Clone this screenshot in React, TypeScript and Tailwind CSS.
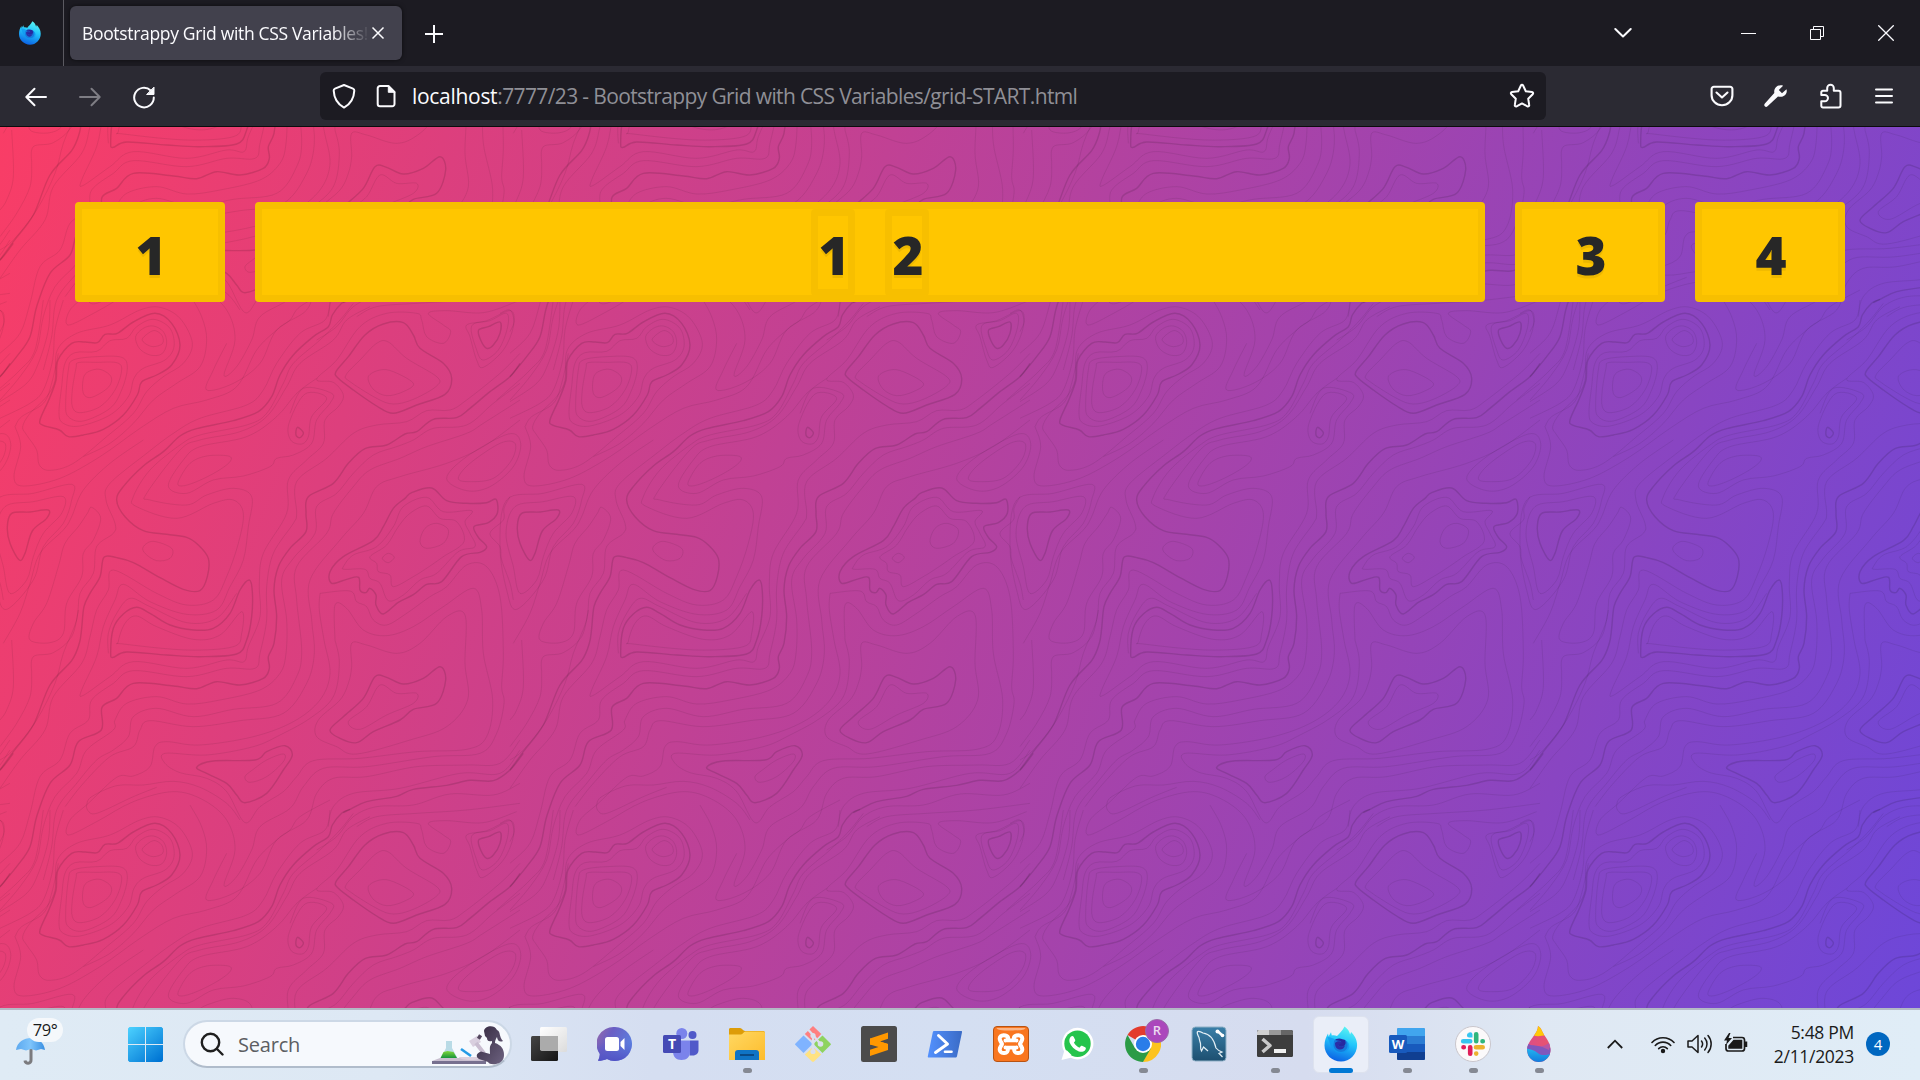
import React from 'react';

/* ---------- topographic background ---------- */

const TILE = 1530;

const boldRings = [
  '120,360 148,296 168,240 174,180 215,130 255,126 292,128 315,103 352,100 400,66 465,40 515,70 540,135 515,195 470,225 425,246 412,285 370,345 310,388 250,405 205,410 178,390 130,376',
  '1008,215 1045,170 1095,105 1150,72 1210,68 1240,105 1260,145 1330,190 1355,235 1335,283 1250,315 1180,340 1130,318 1060,270 1015,235',
  '1436,90 1465,80 1500,66 1500,100 1480,135 1460,145 1442,120',
  '892,382 910,398 900,413 888,405',
  '1235,578 1295,564 1340,602 1400,610 1460,608 1488,598 1492,640 1465,668 1422,680 1435,712 1460,740 1440,757 1385,770 1325,845 1280,853 1240,884 1195,907 1150,942 1128,915 1128,885 1110,865 1098,878 1080,870 1076,832 1040,838 995,850 990,815 1030,770 1120,722 1150,680 1180,625 1215,595',
  '35,640 90,636 145,630 140,655 97,693 75,760 58,780 30,730 22,680',
  '340,985 370,942 410,922 450,940 510,975 580,990 640,985 690,940 720,870 748,840 757,875 755,950 740,1020 710,1062 600,1070 500,1065 380,1056 340,1072 332,1060',
  '590,1402 640,1383 765,1380 800,1355 855,1337 877,1365 850,1410 800,1480 735,1508 710,1485 680,1450 620,1420',
  '990,1290 1030,1250 1090,1195 1125,1130 1160,1132 1210,1152 1270,1135 1320,1100 1337,1140 1310,1210 1240,1228 1200,1260 1120,1295 1070,1328 1020,1315',
];

const boldLines = [
  '1570,1360 1530,1410 1480,1442 1410,1441 1340,1456 1240,1468 1190,1489 1100,1505 1050,1528 1030,1538',
  '1050,-2 1025,10 997,45 985,80 940,110 880,165 840,225 815,290 775,335 700,362 590,386 540,408 490,455 430,498 370,560 350,600 375,650 430,692 500,703 560,712 595,735 625,775 622,830 600,872 550,868 480,833 400,788 350,773 312,772 300,830 270,880 252,920 245,985 238,1030 215,1082 150,1155 100,1275 40,1355 0,1410',
  '1560,190 1530,230 1470,275 1410,325 1370,353 1300,358 1250,395 1215,402 1160,435 1095,446 1045,490 1000,550 925,590 918,640 918,695 870,745 835,800 822,870 830,950 822,1030 805,1070 808,1105 790,1135 720,1155 650,1145 590,1166 520,1158 400,1150 350,1195 306,1222 304,1290 235,1325 210,1395 150,1450 110,1550 90,1640 50,1700 0,1760',
];

const thinRings = [
  '407,110 430,85 460,78 490,95 500,130 485,162 450,165 418,145',
  '428,115 460,92 485,105 488,130 460,140 435,130',
  '250,235 265,215 300,208 333,230 325,262 275,292 250,280',
  '235,188 290,187 350,188 365,210 345,270 300,320 240,338 217,320 217,270 228,205',
  '220,180 290,170 365,172 382,205 365,270 330,325 250,363 205,350 197,310 205,210',
  '177,340 185,260 195,190 225,158 290,154 330,122 380,115 410,80 460,58 510,85 522,140 495,180 430,205 402,235 385,290 330,345 240,378 190,370',
  '68,380 90,340 140,290 165,240 172,150 230,100 330,75 420,30 480,22 540,55 577,130 550,190 490,230 440,275 400,340 320,410 220,490 150,511 118,495 110,450 80,405',
  '535,545 570,490 620,468 685,468 690,485 650,515 590,545 545,558',
  '867,370 915,282 980,294 935,350 925,410 905,432 872,420',
  '1038,225 1080,180 1130,130 1165,126 1220,175 1310,230 1310,258 1240,298 1180,312 1130,295 1050,245',
  '1105,230 1140,210 1180,215 1240,250 1210,275 1160,287 1120,268',
  '1400,75 1460,62 1532,32 1540,80 1510,150 1450,202 1430,180 1410,110',
  '1415,78 1470,62 1520,40 1522,85 1495,150 1450,180 1430,150',
  '1340,535 1400,470 1525,402 1562,430 1540,500 1470,560 1400,572',
  '1375,535 1410,490 1500,430 1545,430 1535,480 1480,535 1410,545',
  '1030,800 1060,765 1130,740 1180,680 1210,620 1280,592 1330,635 1415,632 1395,665 1410,700 1425,740 1375,755 1310,820 1260,840 1210,885 1165,902 1140,850 1110,835 1095,808 1035,808',
  '1110,770 1160,735 1195,680 1230,640 1280,618 1320,655 1370,665 1392,725 1330,770 1290,798 1240,830 1180,860 1170,825 1135,815 1130,790',
  '1260,725 1275,685 1310,670 1345,690 1330,730 1280,745',
  '1147,775 1165,760 1183,772 1165,788',
  '15,620 100,605 190,590 185,640 130,700 100,770 80,840 30,880 10,800 -12,700',
  '-10,600 100,580 215,553 215,600 190,670 130,740 100,840 20,928 -10,870 -30,740',
  '262,640 275,622 302,655 280,720 250,760 245,830 200,910 190,1000 150,1028 90,1020 100,970 140,910 175,800 195,730 235,680',
  '430,740 460,724 515,745 510,775 470,782 435,760',
  '355,1025 375,970 410,948 470,980 580,1018 660,1005 725,935 725,1000 700,1040 560,1050 370,1032',
  '735,1430 760,1408 800,1380 850,1362 850,1385 800,1430 750,1447',
  '1045,1265 1100,1220 1140,1155 1190,1180 1250,1180 1240,1210 1160,1245 1080,1288',
  '1055,1100 1055,1030 1100,1035 1190,1060 1260,1030 1340,950 1395,945 1395,1090 1403,1200 1340,1280 1230,1320 1070,1362 1010,1340 950,1310 955,1260 1020,1200 1045,1150',
];

const thinLines = [
  '130,0 105,150 60,210 0,265 -40,300',
  '150,0 145,90 115,190 80,250 0,305',
  '190,0 165,90 158,180 130,270 90,310 0,355',
  '-30,40 0,30 12,65 0,95',
  '45,380 62,440 42,530 70,558 180,535 300,470 420,385 520,325 620,300 710,260 770,150 830,90 870,60 900,20 990,-30',
  '45,380 65,350 130,310 155,250 175,160',
  '570,-15 605,50 620,120 600,200 530,250 460,300 400,370 330,430 250,470',
  '990,0 975,60 900,100 830,190 790,270 740,315 600,355 520,400 440,460 330,550 318,600 345,670 340,700 290,740 280,820 240,880 230,960 190,1060 165,1150 110,1260 40,1350 0,1380',
  '1060,10 1020,60 960,120 880,190 850,250 800,340 740,375 600,405 540,435 450,510 400,590 410,620 530,655 640,610 700,600 730,640 715,730 680,830 640,900 560,915 470,880 340,810 325,870 290,930 270,1010 245,1090 160,1190 135,1290 60,1380 0,1465',
  '1110,20 1040,60 1000,120 900,190 860,260 800,350 720,395 600,420 540,450 440,580 450,600 560,615 620,585 700,565 755,590 745,680 730,780 690,860 650,930 560,943 450,905 370,853 345,900 310,980 290,1070 245,1170 250,1186 330,1130 400,1085 560,1105 680,1080 732,1085 745,1040 780,950 778,850 790,760 860,640 865,540 920,480 970,430 975,360 1015,320 1030,285 1000,247 950,238 1010,180 1080,80 1160,40 1250,40 1265,60 1280,110 1330,130 1352,95 1330,75 1285,40 1340,32 1450,38 1550,5',
  '870,340 910,265 995,280 990,310 950,360 935,430 880,465 830,475 810,500 730,528 640,540 560,580 505,558 550,480 600,440 740,410 830,350 890,280 950,235',
  '325,1060 325,1000 350,940 390,895 450,920 560,968 650,955 710,880',
  '1560,160 1500,220 1400,300 1350,330 1280,332 1220,365 1130,375 1060,400 980,475 890,545 890,640 880,670 820,760 800,860 800,960 780,1060 765,1105 680,1105 560,1130 400,1112 340,1150 275,1200 265,1260 210,1300 180,1380 120,1430 90,1540 60,1630 0,1690',
  '1560,250 1480,310 1400,375 1300,385 1240,420 1190,440 1120,465 1060,520 1010,580 950,620 945,700 880,775 845,840 860,960 858,1060 840,1120 780,1170 660,1200 560,1212 470,1190 380,1210 345,1260 340,1290 260,1350 230,1420 165,1490 130,1580 110,1680 60,1760 0,1830',
  '1560,300 1450,370 1400,400 1280,440 1200,475 1110,510 1060,560 1000,640 980,700 890,800 890,900 905,1050 890,1130 830,1210 700,1228 580,1250 470,1225 400,1250 385,1310 340,1350 290,1380 230,1450 170,1530 155,1640 130,1740',
  '1560,360 1450,440 1340,490 1200,530 1130,560 1090,640 1020,720 930,840 935,960 943,1060 920,1150 850,1240 720,1262 580,1280 450,1262 420,1290 400,1340 330,1370 250,1450 195,1520',
  '960,880 1050,873 1070,905 1100,920 1120,960 1160,975 1220,940 1290,890 1340,860 1400,795 1460,800 1500,890 1510,1060 1505,1160 1512,1210 1490,1300 1440,1360 1300,1370 1100,1400 970,1405 910,1460 870,1525 780,1580 755,1650 710,1730 672,1755 705,1650 680,1560 610,1500 520,1475 400,1505 290,1565 205,1605 210,1560 265,1510 350,1432 400,1428 450,1400 465,1340 500,1325 600,1335 760,1310 880,1265 960,1200 990,1120 972,1020 958,930 960,880',
  '1005,1020 1005,915 1040,925 1090,990 1160,1007 1240,980 1330,920 1420,865 1445,930 1450,1060 1478,1200 1460,1310 1400,1348 1250,1355 1080,1375 940,1382 890,1430 850,1475 780,1520 735,1568 680,1475 620,1435 540,1418 495,1390 495,1360 620,1365 760,1340 840,1305 930,1255 1000,1190 1018,1090 1005,1020',
  '262,1530 260,1515 275,1490 350,1457 430,1455 520,1444 600,1462 680,1510 720,1560',
  '262,1530 290,1540 400,1490 470,1462',
  '1560,1320 1500,1390 1400,1395 1250,1400 1100,1430 1000,1435 950,1480 920,1560 830,1620 780,1720 700,1780 620,1800 640,1740 680,1660',
  '1560,1350 1500,1420 1380,1420 1200,1465 1060,1480 1000,1520 985,1580',
  '1560,1450 1480,1485 1350,1482 1240,1515 1130,1520 1060,1550 1010,1610 950,1650',
  '1560,1510 1400,1530 1250,1540 1130,1550 1070,1580',
  '1530,590 1512,625 1510,660 1470,700 1500,740 1505,780 1530,850 1540,900',
  '35,1020 40,1160 20,1230 0,1260',
  '95,1120 100,1070 160,1058 215,1010 235,930',
  '95,1120 90,1190 50,1270 0,1340',
  '10,1030 60,940 90,850 120,760 190,690 215,650 250,570 330,490 430,420',
];

type Pt = [number, number];

function smooth(source: string, closed: boolean): string {
  const p: Pt[] = source.split(' ').map((s) => s.split(',').map(Number) as Pt);
  const n = p.length;
  const at = (i: number): Pt => (closed ? p[(i + n) % n] : p[Math.max(0, Math.min(n - 1, i))]);
  let d = `M${p[0][0]} ${p[0][1]}`;
  for (let i = 0; i < (closed ? n : n - 1); i++) {
    const [a, b, c, e] = [at(i - 1), at(i), at(i + 1), at(i + 2)];
    d += `C${(b[0] + (c[0] - a[0]) / 6).toFixed(1)} ${(b[1] + (c[1] - a[1]) / 6).toFixed(1)} ${(c[0] - (e[0] - b[0]) / 6).toFixed(1)} ${(c[1] - (e[1] - b[1]) / 6).toFixed(1)} ${c[0]} ${c[1]}`;
  }
  return closed ? d + 'Z' : d;
}

const boldPath = boldRings.map((s) => smooth(s, true)).join('') + boldLines.map((s) => smooth(s, false)).join('');
const thinPath = thinRings.map((s) => smooth(s, true)).join('') + thinLines.map((s) => smooth(s, false)).join('');
const shifts = [-TILE, 0, TILE];

function Topography() {
  return (
    <svg className="absolute inset-0 h-full w-full" aria-hidden="true">
      <defs>
        <g id="contours" fill="none" stroke="#000">
          <path d={thinPath} strokeWidth="2.5" strokeOpacity="0.095" />
          <path d={boldPath} strokeWidth="4.3" strokeOpacity="0.12" />
        </g>
        <pattern id="topo" width={TILE} height={TILE} patternUnits="userSpaceOnUse" patternTransform="translate(0 173) scale(0.33333)">
          {shifts.map((x) => shifts.map((y) => <use key={`${x},${y}`} href="#contours" x={x} y={y} />))}
        </pattern>
      </defs>
      <rect width="100%" height="100%" fill="url(#topo)" />
    </svg>
  );
}

/* ---------- icons ---------- */

function FirefoxDev({ size, id }: { size: number; id: string }) {
  return (
    <svg width={size} height={size} viewBox="0 0 36 36">
      <defs>
        <linearGradient id={id} x1="0.7" y1="0" x2="0.4" y2="1">
          <stop offset="0" stopColor="#5cf6f2" />
          <stop offset="0.45" stopColor="#22c4fb" />
          <stop offset="1" stopColor="#0b62e4" />
        </linearGradient>
      </defs>
      <path d="M21.500.5c3 2 5 4.800 5.600 8l1-2.500c3 3 6 7.500 6 13C34.100 28 27 35.500 18 35.500S1.500 28.500 1.500 19.500c0-5 1.500-8.500 3.500-12l.6 3L8 6.300l.8 3.200c1.800-.4 3.700-.1 5.200.6C16 7.500 19.500 5 21.500.5Z" fill={`url(#${id})`} />
      <path d="M11 15c2-2.500 5.500-3 8.500-1.700 3 .2 5.500 3 5 7-.5 4-3.500 5.700-6.500 5.700-4 0-7.500-3-7.500-7Z" fill="#26289f" />
      <path d="M4.500 11c3 .5 6 .8 8.500 3.200 2 .4 4 .3 5.200 1.100-.2 1.400-2.200 2-3.700 2.300 0 2.600 2.500 3.800 5 2.900 3-1 3.800-3.500 2.500-6 4 1 5.500 5.500 3.300 9-3 4.500-10.300 5-14.300 1-3-3-4.500-8-6.500-13.500Z" fill="#1098f2" opacity=".75" />
      <path d="M12 17c2-2.500 6-2 7.500-.5-1.200 1.300-3.500 1.600-4.500 2.500 1.500 2.500 5 2 7 .3-.5 3-3 4.500-5.500 4.200-3-.4-4.500-3-4.500-6.500Z" fill="#2b2da6" />
    </svg>
  );
}

const line = { fill: 'none', stroke: '#fbfbfe', strokeWidth: 2, strokeLinecap: 'round' as const, strokeLinejoin: 'round' as const };

const BackIcon = () => (
  <svg width="24" height="24" viewBox="0 0 24 24" {...line}><path d="M22 12H2.500M10.500 3.800 2.300 12l8.200 8.200" /></svg>
);
const ForwardIcon = () => (
  <svg width="24" height="24" viewBox="0 0 24 24" {...line} stroke="#7e7d84"><path d="M2 12h19.500M13.500 3.800l8.200 8.200-8.200 8.200" /></svg>
);
const ReloadIcon = () => (
  <svg width="24" height="24" viewBox="0 0 24 24" {...line}>
    <path d="M21.800 12.500A9.800 9.800 0 1 1 18.700 5.400" />
    <path d="M22 2.500v7h-7Z" fill="#fbfbfe" strokeWidth="1" />
  </svg>
);
const ShieldIcon = () => (
  <svg width="24" height="26" viewBox="0 0 24 26" {...line}>
    <path d="M12 2 21 5.600c1 .4 1.400 1 1.300 2C22 15 18.500 21 12 24.600 5.500 21 2 15 1.700 7.600c-.1-1 .3-1.600 1.300-2Z" />
  </svg>
);
const PageIcon = () => (
  <svg width="20" height="24" viewBox="0 0 20 24" {...line}>
    <path d="M4 2h8.500L18.500 8v12a2.300 2.300 0 0 1-2.300 2.300H4A2.300 2.300 0 0 1 1.700 20V4.300A2.300 2.300 0 0 1 4 2Z" />
    <path d="M12.300 2v6.300h6.200Z" fill="#fbfbfe" strokeWidth="1" />
  </svg>
);
const StarIcon = () => (
  <svg width="26" height="26" viewBox="0 0 26 26" {...line}>
    <path d="M11.900 2.500c.5-1 1.700-1 2.200 0l2.700 5.700 6.200.9c1.100.2 1.500 1.300.7 2.100l-4.500 4.500 1 6.300c.2 1-.9 1.800-1.800 1.300L13 20.400l-5.400 2.900c-1 .5-2-.3-1.800-1.300l1-6.300-4.500-4.500c-.8-.8-.4-1.900.7-2.100l6.200-.9Z" />
  </svg>
);
const PocketIcon = () => (
  <svg width="24" height="22" viewBox="0 0 24 22" {...line} strokeWidth={2.1}>
    <path d="M3.800 1.800h16.400a2.200 2.200 0 0 1 2.200 2.200v6.200a10.400 10 0 0 1-20.800 0V4a2.200 2.200 0 0 1 2.200-2.200Z" />
    <path d="m6.500 7.500 5.500 5 5.500-5" />
  </svg>
);
const WrenchIcon = () => (
  <svg width="24" height="24" viewBox="0 0 24 24">
    <path d="M22.500 5.200 18 9.300l-3.200-3.200 4.300-4.400C14.500.1 9.500 3.300 10.300 9L.9 19.600c-.9 1-.8 1.900-.1 2.700.8.800 1.800.8 2.700 0L14 12.600c5.800 1.400 9.900-2.800 8.500-7.400Z" fill="#fbfbfe" />
  </svg>
);
const PuzzleIcon = () => (
  <svg width="22" height="26" viewBox="0 0 22 26" {...line}>
    <path d="M3 7.700h4.200V5a3.300 3.300 0 0 1 6.600 0v2.700h4.700a2 2 0 0 1 2 2v12.800a2 2 0 0 1-2 2H3a1.700 1.700 0 0 1-1.700-1.700v-4.500h3.500a3.200 3.200 0 0 0 0-6.400H1.300V9.400A1.700 1.700 0 0 1 3 7.700Z" />
  </svg>
);
const MenuIcon = () => (
  <svg width="18" height="16" viewBox="0 0 18 16" {...line}><path d="M1 1.500h16M1 8h16M1 14.500h16" /></svg>
);

const Sz = ({ children, w = 36, h = 36 }: { children: React.ReactNode; w?: number; h?: number }) => (
  <svg width={w} height={h} viewBox={`0 0 ${w} ${h}`}>{children}</svg>
);

const TaskView = () => (
  <Sz>
    <defs>
      <linearGradient id="tvd" x1="0" y1="0" x2="1" y2="1"><stop stopColor="#454545" /><stop offset="1" stopColor="#151515" /></linearGradient>
      <linearGradient id="tvl" x1="0" y1="0" x2="1" y2="1"><stop stopColor="#fff" /><stop offset="1" stopColor="#dcdcdc" /></linearGradient>
    </defs>
    <rect x="9" y="1" width="27" height="25" rx="1.500" fill="url(#tvl)" />
    <rect x="0" y="10" width="27" height="25" rx="1.500" fill="url(#tvd)" />
    <path d="M9 10h18v15H10.500L9 24Z" fill="#ababab" />
  </Sz>
);
const Chat = () => (
  <Sz>
    <defs><linearGradient id="cht" x1="0" y1="0" x2="1" y2="0.500"><stop stopColor="#9a6aa8" /><stop offset="0.400" stopColor="#6a5fc4" /><stop offset="1" stopColor="#5b7fe0" /></linearGradient>
      <linearGradient id="chs" x1="0" y1="0" x2="0" y2="1"><stop offset="0.450" stopColor="#5558c8" stopOpacity="0" /><stop offset="1" stopColor="#5152c4" /></linearGradient></defs>
    <path d="M18 1a17 17 0 1 1-8 32c-2.500 1.200-5.500 1.700-9 1.800 1-1.800 1.600-4 1.800-6.800A17 17 0 0 1 18 1Z" fill="url(#cht)" />
    <path d="M18 1a17 17 0 1 1-8 32c-2.500 1.200-5.500 1.700-9 1.800 1-1.800 1.600-4 1.800-6.800A17 17 0 0 1 18 1Z" fill="url(#chs)" />
    <rect x="8" y="11" width="14" height="14" rx="2.500" fill="#fff" />
    <path d="m23.500 16 4-4v12l-4-4Z" fill="#fff" />
  </Sz>
);
const Teams = () => (
  <Sz>
    <circle cx="29.500" cy="9" r="4" fill="#5059c9" />
    <path d="M27 14.500h8.500V24c0 3-2 5.500-6 5.500h-3Z" fill="#5059c9" />
    <circle cx="18.800" cy="7.500" r="5.500" fill="#7b83eb" />
    <path d="M10 14.500h17v11c0 5-3 8.500-8.500 8.500S10 31 10 25Z" fill="#7b83eb" />
    <rect x="0" y="9" width="18" height="18" rx="1.500" fill="#454ab5" />
    <text x="9" y="23" fontSize="14" fontWeight="700" textAnchor="middle" fill="#fff">T</text>
  </Sz>
);
const Folder = () => (
  <Sz>
    <defs><linearGradient id="fol" x1="0" y1="0" x2="1" y2="1"><stop stopColor="#ffd862" /><stop offset="1" stopColor="#fdbc2c" /></linearGradient></defs>
    <path d="M0 3.500C0 2.500.700 2 1.500 2H11c2 0 3 3 5 3h18c1 0 2 .6 2 1.500V15H0Z" fill="#dd9c08" />
    <path d="M0 8.500h12c2 0 2.500-3 4.500-3H34.500c.8 0 1.500.7 1.500 1.500V34H0Z" fill="url(#fol)" />
    <path d="M6 34v-7a3 3 0 0 1 3-3h18a3 3 0 0 1 3 3v7Z" fill="#0f74c5" />
    <path d="M11 29h14" stroke="#0a4a85" strokeWidth="2" />
  </Sz>
);
const Git = () => (
  <Sz>
    <path d="M18 0 9.800 8l4.500 4.300 3 2.400 4.200-1.600L26.300 8Z" fill="#ff7f80" />
    <path d="M8.500 9.500.500 17.500c-.6.500-.6 1 0 1.500l8 8L16 19.500c1-1 1-2 0-3Z" fill="#7fb3ff" />
    <path d="m27.500 9.500 8 8c.6.500.6 1 0 1.500l-8 8L20 19.500c-1-1-1-2 0-3Z" fill="#8ed35f" />
    <path d="M18 21 9.800 28.500 17 35.500c.7.500 1.300.5 2 0l7.300-7Z" fill="#ffe282" />
    <path d="m13 3.500 5 5.500v17M18 9l7 8.500" stroke="#dbe0ee" strokeWidth="2.200" fill="none" />
    <circle cx="18" cy="9.500" r="2.600" fill="#dbe0ee" /><circle cx="25.500" cy="18" r="2.800" fill="#dbe0ee" /><circle cx="18" cy="25.500" r="2.600" fill="#dbe0ee" />
  </Sz>
);
const Sublime = () => (
  <Sz>
    <rect width="36" height="36" rx="2.500" fill="#4b4b4b" />
    <path d="M9 12.500 27 6.500v6.300l-8 2.600 8 2.700v6L9 30v-6.300l8.500-2.700L9 18.500Z" fill="#ff9800" />
    <path d="m9 12.500 18 5.600v2.400L9 18.500Z" fill="#ff9800" />
  </Sz>
);
const PowerShell = () => (
  <Sz>
    <defs><linearGradient id="psh"><stop stopColor="#5391fe" /><stop offset="1" stopColor="#3a6bc6" /></linearGradient></defs>
    <path d="M7.300 5H34c.8 0 1.200.5 1 1.200l-5 24c-.2.800-.8 1.300-1.500 1.300H1.800c-.8 0-1.200-.5-1-1.300l5-24C6 5.500 6.500 5 7.300 5Z" fill="url(#psh)" />
    <path d="m11.500 9.500 9 8.500L8.500 26.500" fill="none" stroke="#fff" strokeWidth="3" strokeLinecap="round" strokeLinejoin="round" />
    <path d="M18 25.800h6.500" stroke="#fff" strokeWidth="2.600" strokeLinecap="round" />
  </Sz>
);
const Xampp = () => (
  <Sz>
    <rect x=".5" y=".5" width="35" height="35" rx="3.500" fill="#f9761f" stroke="#b75313" />
    <path d="M3.500 2h29c-1 2-4 2.500-14.500 2.500S4.500 4 3.500 2Z" fill="#fbb586" />
    <path d="M12.500 14.500h11M12.500 21.500h11M12.500 9.500c-4.500-1-6.500 1.500-5.500 4.500.5 2 2 3 2 4s-1.500 2-2 4c-1 3 1 5.500 4.500 5 3 0 3.500-2 3.500-5M12.500 9.500c2.500.5 3 2.500 2.500 5M23.500 9.500c4.500-1 6.500 1.500 5.500 4.500-.5 2-2 3-2 4s1.500 2 2 4c1 3-1 5.500-4.500 5-3 0-3.500-2-3.500-5M23.500 9.500c-2.500.5-3 2.500-2.500 5" fill="none" stroke="#fff" strokeWidth="4" strokeLinejoin="round" strokeLinecap="round" />
    <path d="M13 18h10" stroke="#f9761f" strokeWidth="3" />
  </Sz>
);
const WhatsApp = () => (
  <Sz>
    <path d="M18.500 1.800a15.800 15.800 0 1 1-6.800 30L2.500 34l2.600-8.600A15.800 15.800 0 0 1 18.500 1.800Z" fill="#fff" />
    <circle cx="18.500" cy="17.700" r="13.200" fill="#25c44c" />
    <path d="m5.500 31 2-7 5 5Z" fill="#fff" />
    <path d="M12 10.500c1-.8 2-.7 2.600.2l1.500 3c.4 1 .1 1.500-1.200 2.900 1.300 2.500 3 4 5.600 5.100 1.500-2 2-2.200 3-1.700l2.600 1.300c1.200.6.900 2-.2 3.200-1.300 1.300-3.800 1.700-6 .9-4.800-1.700-7.700-5-9.200-8.600-.8-2.300-.3-4.900 1.300-6.300Z" fill="#fff" />
  </Sz>
);
const Chrome = () => (
  <Sz>
    <path d="M18 18 2.500 9A18 18 0 0 1 33.600 9H18Z" fill="#e33b2e" />
    <path d="M18 18 33.600 9A18 18 0 0 1 18 36l6-13Z" fill="#fcc31e" />
    <path d="M2.500 9A18 18 0 0 0 18 36l7.800-13.500L18 18 10.200 22.500Z" fill="#2b9b46" />
    <path d="M18 9h15.600l-7.800 13.500Z" fill="#fcc31e" />
    <circle cx="18" cy="18" r="9" fill="#fff" /><circle cx="18" cy="18" r="7.200" fill="#2a7de9" />
  </Sz>
);
const MySql = () => (
  <Sz>
    <defs><linearGradient id="mys" x1="0" y1="0" x2="0" y2="1"><stop stopColor="#3a7fa8" /><stop offset="1" stopColor="#1d4f70" /></linearGradient></defs>
    <rect x="1" y="1" width="34" height="34" rx="3.500" fill="url(#mys)" stroke="#8fb0c6" />
    <path d="M6.500 5.500c2-.8 4 .5 5.500 1.500 7 1 11 6 13 15 1.500 2 3.500 3 6 4l-3 1.500 3.500 3.500M6.500 5.500c-1 2 .5 4 1.500 6 .5 3 1 4 1.500 6 .3 2.500-.5 5 1 7.500l2-4 4.500 4" fill="none" stroke="#e4eff5" strokeWidth="1.200" />
    <path d="m27 5.500 5 4.500" stroke="#fff" strokeWidth="2.500" /><circle cx="26.500" cy="5.500" r="2" fill="#fff" /><circle cx="31.500" cy="9.500" r="1.800" fill="#fff" />
  </Sz>
);
const TerminalIcon = () => (
  <Sz>
    <rect y="4" width="36" height="27" rx="1.500" fill="#3d3d3d" />
    <path d="M1.500 4H12v5H0V5.500Z" fill="#cfcfcf" /><path d="M12 4h12v5H12Z" fill="#999" /><path d="M24 4h10.500L36 5.500V9H24Z" fill="#666" />
    <path d="m5.500 13 7.500 6.500L5.500 26" fill="none" stroke="#c9c9c9" strokeWidth="3.500" strokeLinejoin="round" />
    <rect x="17" y="23" width="12" height="4" fill="#f0f0f0" />
  </Sz>
);
const Word = () => (
  <Sz>
    <rect x="8" y="2" width="28" height="32" rx="1.500" fill="#2b7cd3" />
    <path d="M9.500 2h25A1.500 1.500 0 0 1 36 3.500V10H8V3.500A1.500 1.500 0 0 1 9.500 2Z" fill="#41a5ee" />
    <path d="M8 18h28v8H8Z" fill="#185abd" /><path d="M8 26h28v6.500a1.500 1.500 0 0 1-1.500 1.500h-25A1.500 1.500 0 0 1 8 32.500Z" fill="#103f91" />
    <rect x="0" y="9" width="18" height="18" rx="1.500" fill="#185abd" />
    <text x="9" y="23" fontSize="13" fontWeight="700" textAnchor="middle" fill="#fff">W</text>
  </Sz>
);
const Slack = () => (
  <Sz>
    <circle cx="18" cy="18" r="17.500" fill="#fbf9fa" stroke="#c9c6cc" />
    <g strokeWidth="4.600" strokeLinecap="round" fill="none">
      <path d="M15.200 8.500h.01M8.200 15.300h7M15.200 8.500v.8h-1" stroke="#36c5f0" />
      <path d="M21.200 8.300v7M27.500 15.300h.3" stroke="#2eb67d" />
      <path d="M21 21.300h6.700M21.200 27.500v.1" stroke="#ecb22e" />
      <path d="M15.200 21.300v6.500M8.500 21.300h.3" stroke="#e01e5a" />
    </g>
  </Sz>
);
const Paint = () => (
  <Sz>
    <defs>
      <clipPath id="drop"><path d="M17 0c3 1.500 4 5.500 6.500 9.500 3.500 5 6 9 6 14.500a11.700 12 0 0 1-23.400 0c0-5 2.500-8.500 5.500-12.500C15 7 17 4 17 0Z" /></clipPath>
      <linearGradient id="drb" x1="0" y1="0" x2="0" y2="1"><stop stopColor="#22b7f0" /><stop offset="1" stopColor="#1279dd" /></linearGradient>
      <linearGradient id="drp" x1="0" y1="0" x2="1" y2="0"><stop stopColor="#d84c8d" /><stop offset="1" stopColor="#ed5565" /></linearGradient>
    </defs>
    <g clipPath="url(#drop)">
      <rect width="36" height="36" fill="url(#drp)" />
      <path d="M12 9c4 2 8 1 13 0V0H12Z" fill="#ffc908" />
      <path d="M4 15c3 5 8 4 13 5s10 1 14 2l-2 8H15L4 24Z" fill="#7f57bd" />
      <path d="M30 14c-2 4-6 6-11 6l9 4Z" fill="#b656a5" />
      <path d="M4 22c4 1 9 2 12 4.500 3 3 8 3.500 14 1v9H4Z" fill="url(#drb)" />
    </g>
  </Sz>
);

const apps = [
  { name: 'taskview', icon: <TaskView /> },
  { name: 'chat', icon: <Chat /> },
  { name: 'teams', icon: <Teams /> },
  { name: 'explorer', icon: <Folder />, running: true },
  { name: 'git', icon: <Git /> },
  { name: 'sublime', icon: <Sublime /> },
  { name: 'powershell', icon: <PowerShell /> },
  { name: 'xampp', icon: <Xampp /> },
  { name: 'whatsapp', icon: <WhatsApp /> },
  { name: 'chrome', icon: <Chrome />, running: true, badge: 'R' },
  { name: 'mysql', icon: <MySql /> },
  { name: 'terminal', icon: <TerminalIcon />, running: true },
  { name: 'firefox', icon: <FirefoxDev size={36} id="ffb" />, active: true },
  { name: 'word', icon: <Word />, running: true },
  { name: 'slack', icon: <Slack />, running: true },
  { name: 'paint', icon: <Paint />, running: true },
];

/* ---------- browser ---------- */

function TabBar() {
  return (
    <div className="flex h-[66px] items-center bg-[#1c1b22]">
      <div className="flex h-full w-[64px] items-center border-r border-[#5b5a61] pl-[18px]">
        <FirefoxDev size={24} id="ffs" />
      </div>
      <div className="ml-[6px] flex h-[54px] w-[332px] items-center rounded-md bg-[#42414d] pl-3 shadow-[0_0_4px_rgba(0,0,0,0.6)]">
        <span className="w-[286px] overflow-hidden whitespace-nowrap pt-px text-[17.500px] tracking-[-0.33px] text-[#fbfbfe] [mask-image:linear-gradient(to_right,#000_250px,transparent_288px)]">
          Bootstrappy Grid with CSS Variables!
        </span>
        <svg width="14" height="14" viewBox="0 0 14 14" className="ml-[3px]" stroke="#fbfbfe" strokeWidth="1.500"><path d="m1.500 1.500 11 11M12.500 1.500l-11 11" /></svg>
      </div>
      <svg width="18" height="18" viewBox="0 0 18 18" className="ml-[23px] mt-[2px] shrink-0" stroke="#fbfbfe" strokeWidth="2"><path d="M9 0v18M0 9h18" /></svg>
      <div className="ml-auto flex items-center pr-[26px]">
        <svg width="18" height="12" viewBox="0 0 18 12" className="mr-[109px]" {...line}><path d="m1.300 2 7.700 7.500L16.700 2" /></svg>
        <div className="mr-[54px] h-px w-[15px] bg-[#fbfbfe]" />
        <svg width="14" height="14" viewBox="0 0 14 14" className="mr-[54px]" fill="none" stroke="#fbfbfe"><path d="M.5 3.500h10v10H.500ZM3.500 3.500v-3h10v10h-3" /></svg>
        <svg width="16" height="16" viewBox="0 0 16 16" stroke="#fbfbfe" strokeWidth="1.300"><path d="m.3.300 15.400 15.400M15.700.3.300 15.700" /></svg>
      </div>
    </div>
  );
}

function Toolbar() {
  return (
    <div className="flex h-[61px] items-center border-b border-[#0c0c0d] bg-[#2b2a33]">
      <div className="flex w-[320px] items-center gap-[30px] pl-6 pt-[2px]">
        <BackIcon />
        <ForwardIcon />
        <ReloadIcon />
      </div>
      <div className="flex h-12 w-[1226px] items-center rounded-md bg-[#1c1b22] pl-3 pr-[11px]">
        <ShieldIcon />
        <span className="ml-5"><PageIcon /></span>
        <span className="ml-[16px] whitespace-nowrap pt-px text-[21px] tracking-[-0.630px] text-[#8f8f96]">
          <span className="tracking-[-0.3px] text-[#fbfbfe]">localhost</span>:7777/23 - Bootstrappy Grid with CSS Variables/grid-START.html
        </span>
        <span className="ml-auto"><StarIcon /></span>
      </div>
      <div className="ml-auto flex items-center pr-[27px]">
        <span className="mr-[30px]"><PocketIcon /></span>
        <span className="mr-8"><WrenchIcon /></span>
        <span className="mr-[33px]"><PuzzleIcon /></span>
        <MenuIcon />
      </div>
    </div>
  );
}

const item = 'flex h-[100px] items-center justify-center rounded-[4px] bg-[#ffc600] shadow-[inset_0_0_0_7px_rgba(0,0,0,0.03)]';
const nested = 'flex h-[87px] w-[44px] items-center justify-center rounded-[4px] bg-[#ffc600] pt-[5px] pl-[2px] shadow-[inset_0_0_0_7px_rgba(0,0,0,0.03)]';

function Page() {
  return (
    <main className="relative h-[881px] bg-[linear-gradient(110deg,#f93d66,#6d47d9)]">
      <Topography />
      <div className="relative grid grid-cols-[150px_1fr_150px_150px] gap-[30px] p-[75px] text-[53px] leading-none font-extrabold text-[#272727] [text-shadow:0_3px_0_rgba(0,0,0,0.07)]">
        <div className={item + ' pt-[5px] pl-[2px]'}>1</div>
        <div className={item + ' gap-[30px]'}>
          <div className={nested}>1</div>
          <div className={nested}>2</div>
        </div>
        <div className={item + ' pt-[5px] pl-[2px]'}>3</div>
        <div className={item + ' pt-[5px] pl-[2px]'}>4</div>
      </div>
    </main>
  );
}

/* ---------- taskbar ---------- */

function ScientistArt() {
  return (
    <svg width="74" height="40" viewBox="0 0 74 40">
      <defs>
        <linearGradient id="body" x1="0" y1="0" x2="1" y2="1"><stop stopColor="#33283e" /><stop offset="1" stopColor="#6d6280" /></linearGradient>
        <linearGradient id="flask" x1="0" y1="0" x2="0" y2="1"><stop stopColor="#7fd83a" /><stop offset="1" stopColor="#17933b" /></linearGradient>
      </defs>
      <path d="M0 36h54v3H0Z" fill="#77708f" /><path d="M0 36 8 33h40l6 3Z" fill="#c9bfd0" />
      <path d="M14 16h6v7l5.500 10H9L14 23Z" fill="#b9dbe6" /><path d="m11.500 27 4-1 6 1 3.500 6H8.500Z" fill="url(#flask)" />
      <path d="m29 24 10 7" stroke="#249be6" strokeWidth="2.600" />
      <path d="M27 32h22c0 2-4 3-10 3s-12-1-12-3Z" fill="#dcd1de" />
      <path d="m37 16 8-5 4 6-8 5Z" fill="#d9cfdf" /><path d="m44 18 7 9-4 4" stroke="#c9bdd0" strokeWidth="4" fill="none" />
      <path d="m46 11 3 2" stroke="#54475e" strokeWidth="4" />
      <path d="M52 6c.5-5 10-7 13-1 4 2 1.500 6 6 11-3 1.500-5.500 0-6-4-1 2-2 3-2 6 6 2 9 6 9 12 0 5-3 8-8 9-4 .5-7 0-8-2l-9-3c-3-1.500-3-5 0-6.500l2-1 9 2.500c0-4-1-8 2-11v-2c-4 1-5-1-5-3l-2-2Z" fill="url(#body)" />
    </svg>
  );
}

function Taskbar() {
  return (
    <footer className="flex h-[72px] items-center border-t-2 border-[#b3b9c5] bg-[linear-gradient(90deg,#dfebf5_0%,#dde8f4_20%,#d5def1_34%,#d4dff2_50%,#d6dcef_68%,#dfe8f3_80%,#e0edf7_100%)] pb-[2px]">
      <div className="relative ml-4 h-[46px] w-[48px]">
        <svg width="30" height="28" viewBox="0 0 30 28" className="absolute left-0 top-[17px]">
          <defs><linearGradient id="umb"><stop stopColor="#5da9ef" /><stop offset=".5" stopColor="#7ec4fb" /><stop offset="1" stopColor="#398fe2" /></linearGradient></defs>
          <path d="M15 11v11a3 3 0 0 1-6 .5" fill="none" stroke="#7b7b7e" strokeWidth="3" />
          <path d="M0 12C1 4 8 0 15 0s13 4 14 12l-4-1-5 1.500-5-1.500-5 1.500-5-1.500Z" fill="url(#umb)" />
        </svg>
        <div className="absolute left-[11px] top-[-3px] flex h-[24px] w-[36px] items-center justify-center rounded-full bg-[#f5f8fb] text-[16.500px] tracking-[-0.4px] text-[#1b1b1b]">79°</div>
      </div>
      <svg width="35" height="35" viewBox="0 0 35 35" className="ml-16">
        <defs><linearGradient id="win" gradientUnits="userSpaceOnUse" x1="0" y1="0" x2="30" y2="35"><stop stopColor="#4dd2ff" /><stop offset="1" stopColor="#0075d4" /></linearGradient></defs>
        <path d="M1.500 0H17v17H0V1.500ZM18 0h15.500L35 1.500V17H18ZM0 18h17v17H1.500L0 33.500ZM18 18h17v15.500L33.500 35H18Z" fill="url(#win)" />
      </svg>
      <div className="ml-[20px] flex h-[48px] w-[329px] items-center rounded-full border-2 border-[#ccd8e6] border-b-[#b0bccb] bg-[#f6f9fd] pl-[15px]">
        <svg width="24" height="24" viewBox="0 0 24 24" fill="none" stroke="#1f1f1f" strokeWidth="2.400" strokeLinecap="round"><circle cx="10.500" cy="10.500" r="8.700" /><path d="m17 17 5.500 5.500" /></svg>
        <span className="ml-[14px] pt-px text-[20px] tracking-[-0.2px] text-[#5c5e62]">Search</span>
        <span className="ml-auto mr-[4px] mt-[2px]"><ScientistArt /></span>
      </div>
      <div className="ml-[4px] flex h-full">
        {apps.map((a) => (
          <div key={a.name} className="relative flex h-full w-[66px] items-center justify-center">
            {a.active && <div className="absolute left-[5px] top-[6px] h-[57px] w-[56px] rounded-md border border-[#dde2ee] bg-[#eaeef8]" />}
            <div className="relative">{a.icon}</div>
            {a.badge && (
              <div className="absolute left-[35px] top-[9px] flex h-6 w-6 items-center justify-center rounded-full border border-[#9a6aa8] bg-[#ab47bc] text-[13px] font-semibold text-[#ecd9f1]">{a.badge}</div>
            )}
            {a.running && <div className="absolute bottom-[5px] h-[5px] w-[9px] rounded-full bg-[#858993]" />}
            {a.active && <div className="absolute bottom-[5px] h-[5px] w-6 rounded-full bg-[#0078d4]" />}
          </div>
        ))}
      </div>
      <div className="ml-auto flex h-full items-center pr-[30px] text-[#1a1a1a]">
        <svg width="16" height="10" viewBox="0 0 16 10" className="mr-[28px]" fill="none" stroke="#1a1a1a" strokeWidth="1.800"><path d="m.8 9 7.200-7.300L15.200 9" /></svg>
        <svg width="24" height="20" viewBox="0 0 24 20" className="mr-[12px]" fill="none" stroke="#1a1a1a" strokeWidth="1.600" strokeLinecap="round">
          <path d="M1 8.500a15 15 0 0 1 22 0M4.300 11.500a10.500 10.500 0 0 1 15.400 0M7.700 14.600a6 6 0 0 1 8.600 0" /><circle cx="12" cy="17" r="1.400" fill="#1a1a1a" />
        </svg>
        <svg width="25" height="20" viewBox="0 0 25 20" className="mr-[12px]" fill="none" stroke="#1a1a1a" strokeWidth="1.500" strokeLinecap="round" strokeLinejoin="round">
          <path d="M1 7h4l6-5.500v17L5 13H1ZM14.500 7a5 5 0 0 1 0 6M17.700 4a9 9 0 0 1 0 12M21 1.500a13 13 0 0 1 0 17" />
        </svg>
        <svg width="24" height="20" viewBox="0 0 24 20" className="mb-[3px] mr-[6px]" fill="none" stroke="#1a1a1a" strokeWidth="1.700">
          <path d="M9 4.500h9a2.500 2.500 0 0 1 2.500 2.500v8.500A2.500 2.500 0 0 1 18 18H4.500A2.500 2.500 0 0 1 2 15.500V11" /><path d="M9.500 6.800H18.300v9H4.300v-3Z" fill="#1a1a1a" stroke="none" /><path d="M22 8.500v5.500" strokeWidth="2.500" /><path d="M5 0 0 7.500h3L2 12l6-7H4.500L6.500 0Z" fill="#1a1a1a" stroke="none" />
        </svg>
        <div className="flex w-[100px] flex-col items-end whitespace-nowrap text-[17.500px] leading-[24px] tracking-[-0.3px]">
          <span>5:48 PM</span>
          <span>2/11/2023</span>
        </div>
        <div className="ml-[12px] flex h-6 w-6 items-center justify-center rounded-full bg-[#0067c0] text-[15px] text-white">4</div>
      </div>
    </footer>
  );
}

export default function App() {
  return (
    <div className="h-[1080px] w-[1920px] overflow-hidden font-['Open_Sans','Noto_Sans',sans-serif]">
      <TabBar />
      <Toolbar />
      <Page />
      <Taskbar />
    </div>
  );
}
